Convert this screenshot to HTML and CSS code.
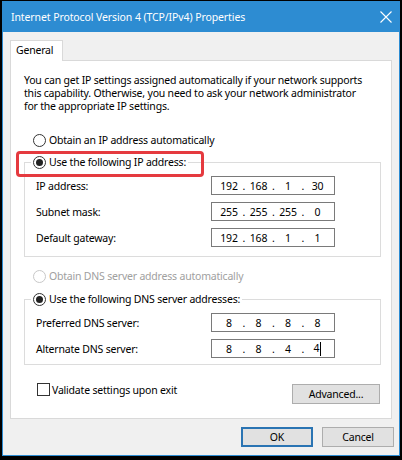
FILE: index.html
```html
<!DOCTYPE html>
<html lang="en">
<head>
    <meta charset="UTF-8">
    <meta name="viewport" content="width=device-width, initial-scale=1.0">
    <title>Internet Protocol Version 4 (TCP/IPv4) Properties</title>
    <link rel="stylesheet" href="styles.css">
</head>
<body>
    <div class="window">
        <div class="titlebar">
            <span class="title">Internet Protocol Version 4 (TCP/IPv4) Properties</span>
            <svg class="close" width="12" height="12" viewBox="0 0 12 12">
                <path d="M0.5 0.5 L11.5 11.5 M11.5 0.5 L0.5 11.5" stroke="#fff" stroke-width="1.1" fill="none"/>
            </svg>
        </div>
        <div class="content">
            <div class="tabs">
                <div class="tab">General</div>
            </div>
            <div class="panel">
                <p class="intro">You can get IP settings assigned automatically if your network supports<br>this capability. Otherwise, you need to ask your network administrator<br>for the appropriate IP settings.</p>

                <div class="option"><span class="radio"></span>Obtain an IP address automatically</div>

                <fieldset class="group">
                    <legend class="option"><span class="radio checked"></span>Use the following IP address:</legend>
                    <div class="fields">
                        <div class="row">
                            <span>IP address:</span>
                            <div class="ip"><span class="seg">192</span><span class="dot">.</span><span class="seg">168</span><span class="dot">.</span><span class="seg">1</span><span class="dot">.</span><span class="seg">30</span></div>
                        </div>
                        <div class="row">
                            <span>Subnet mask:</span>
                            <div class="ip"><span class="seg">255</span><span class="dot">.</span><span class="seg">255</span><span class="dot">.</span><span class="seg">255</span><span class="dot">.</span><span class="seg">0</span></div>
                        </div>
                        <div class="row">
                            <span>Default gateway:</span>
                            <div class="ip"><span class="seg">192</span><span class="dot">.</span><span class="seg">168</span><span class="dot">.</span><span class="seg">1</span><span class="dot">.</span><span class="seg">1</span></div>
                        </div>
                    </div>
                </fieldset>

                <div class="option disabled dns-auto"><span class="radio"></span>Obtain DNS server address automatically</div>

                <fieldset class="group dns">
                    <legend class="option"><span class="radio checked"></span>Use the following DNS server addresses:</legend>
                    <div class="fields">
                        <div class="row">
                            <span>Preferred DNS server:</span>
                            <div class="ip"><span class="seg">8</span><span class="dot">.</span><span class="seg">8</span><span class="dot">.</span><span class="seg">8</span><span class="dot">.</span><span class="seg">8</span></div>
                        </div>
                        <div class="row">
                            <span>Alternate DNS server:</span>
                            <div class="ip"><span class="seg">8</span><span class="dot">.</span><span class="seg">8</span><span class="dot">.</span><span class="seg">4</span><span class="dot">.</span><span class="seg">4<span class="caret"></span></span></div>
                        </div>
                    </div>
                </fieldset>

                <div class="footer-row">
                    <div class="check"><span class="box"></span>Validate settings upon exit</div>
                    <button class="btn advanced">Advanced...</button>
                </div>
            </div>
            <div class="buttons">
                <button class="btn default">OK</button>
                <button class="btn">Cancel</button>
            </div>
        </div>
        <div class="highlight"></div>
    </div>
</body>
</html>
```

FILE: styles.css
```css
* {
    box-sizing: border-box;
}
body {
    margin: 0;
    background: #000;
    font-family: "Noto Sans", "Open Sans", sans-serif;
    font-size: 10.5px;
    letter-spacing: -0.2px;
    color: #000;
}
.window {
    position: relative;
    margin: 1px 0 0 2px;
    width: 398px;
    height: 455px;
    border: 1px solid #2d8cd2;
    background: #f0f0f0;
}
.titlebar {
    height: 30px;
    background: #2d8cd2;
    color: #fff;
    display: flex;
    align-items: center;
    justify-content: space-between;
    padding: 0 7px 0 8px;
    font-size: 10.5px;
    letter-spacing: -0.1px;
}
.close {
    display: block;
}
.content {
    padding: 8px 7px 0 7px;
}
.tabs {
    display: flex;
    height: 20px;
}
.tab {
    position: relative;
    z-index: 1;
    width: 53px;
    height: 21px;
    background: #fff;
    border: 1px solid #d9d9d9;
    border-bottom: none;
    padding-left: 5px;
    line-height: 19px;
}
.panel {
    height: 359px;
    background: #fff;
    border: 1px solid #d9d9d9;
    padding: 13px 11px 0 13px;
}
.intro {
    margin: 0;
    line-height: 13px;
    white-space: nowrap;
}
.option {
    display: flex;
    align-items: center;
    gap: 3px;
    height: 16px;
    margin: 19px 0 0 9px;
    white-space: nowrap;
}
.radio {
    flex: none;
    width: 13px;
    height: 13px;
    border: 1px solid #333;
    border-radius: 50%;
    background: #fff;
    display: flex;
    align-items: center;
    justify-content: center;
}
.radio.checked::after {
    content: "";
    width: 7px;
    height: 7px;
    border-radius: 50%;
    background: #222;
}
.disabled {
    color: #a0a0a0;
}
.disabled .radio {
    border-color: #c8c8c8;
}
.group {
    width: 357px;
    margin: 6px 0 0 0;
    border: 1px solid #dcdcdc;
    padding: 6px 0 9px 6px;
}
.group legend.option {
    margin: 0;
    padding: 0 2px;
}
.fields {
    display: flex;
    flex-direction: column;
    gap: 7px;
    padding-left: 5px;
}
.row {
    display: grid;
    grid-template-columns: 175px 124px;
    align-items: center;
    height: 19px;
}
.ip {
    height: 19px;
    border: 1px solid #7a7a7a;
    display: flex;
    align-items: center;
    padding-left: 6px;
}
.seg {
    width: 22px;
    text-align: center;
}
.dot {
    width: 7.5px;
    text-align: center;
}
.caret {
    display: inline-block;
    width: 1px;
    height: 14px;
    background: #000;
    vertical-align: middle;
    margin-left: 1px;
}
.option.dns-auto {
    margin-top: 11px;
}
.group.dns {
    margin-top: 7px;
    padding-bottom: 6px;
}
.footer-row {
    display: flex;
    justify-content: space-between;
    align-items: flex-start;
    margin-top: 18px;
    padding-left: 13px;
}
.check {
    display: flex;
    align-items: center;
    gap: 2px;
    height: 13px;
}
.box {
    width: 13px;
    height: 13px;
    border: 1px solid #333;
    background: #fff;
}
.btn {
    font-family: inherit;
    font-size: 10.5px;
    letter-spacing: -0.2px;
    height: 20px;
    background: #e1e1e1;
    border: 1px solid #adadad;
    padding: 0;
    color: #000;
}
.advanced {
    width: 88px;
    margin-top: 1px;
}
.buttons {
    display: flex;
    justify-content: flex-end;
    gap: 9px;
    margin: 8px -2px 0 0;
}
.buttons .btn {
    width: 72px;
}
.btn.default {
    border: 2px solid #2a74b3;
}
.highlight {
    position: absolute;
    left: 13px;
    top: 149px;
    width: 188px;
    height: 26px;
    border: 3px solid #e53a3f;
    border-radius: 4px;
}
```
